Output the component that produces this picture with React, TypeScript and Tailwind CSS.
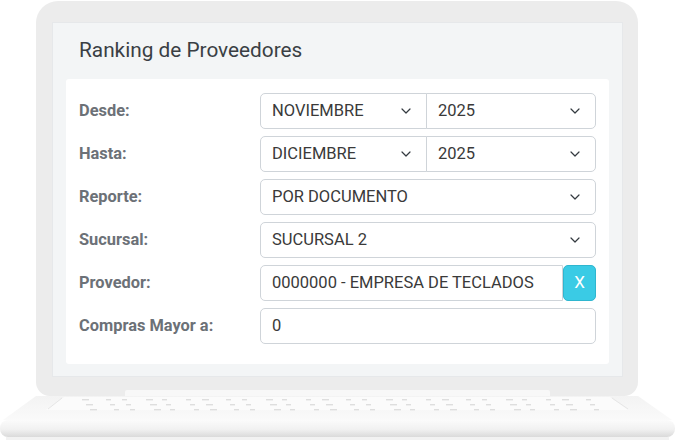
import { ChevronDown } from "lucide-react";

type Field = { label: string; kind: "split" | "select" | "provider" | "input"; values: string[] };

const FIELDS: Field[] = [
  { label: "Desde:", kind: "split", values: ["NOVIEMBRE", "2025"] },
  { label: "Hasta:", kind: "split", values: ["DICIEMBRE", "2025"] },
  { label: "Reporte:", kind: "select", values: ["POR DOCUMENTO"] },
  { label: "Sucursal:", kind: "select", values: ["SUCURSAL 2"] },
  { label: "Provedor:", kind: "provider", values: ["0000000 - EMPRESA DE TECLADOS"] },
  { label: "Compras Mayor a:", kind: "input", values: ["0"] },
];

function Chevron() {
  return <ChevronDown className="h-[16px] w-[16px] text-[#343a40]" strokeWidth={1.8} />;
}

function SelectBox({ value, className }: { value: string; className: string }) {
  return (
    <div
      className={`flex h-full items-center justify-between border border-[#cfd4d9] bg-white pl-[11px] pr-[12px] ${className}`}
    >
      <span>{value}</span>
      <Chevron />
    </div>
  );
}

function Control({ field }: { field: Field }) {
  if (field.kind === "split") {
    return (
      <div className="flex h-full">
        <SelectBox value={field.values[0]} className="w-[167px] rounded-l-[5px]" />
        <SelectBox value={field.values[1]} className="-ml-px flex-1 rounded-r-[5px]" />
      </div>
    );
  }
  if (field.kind === "select") {
    return <SelectBox value={field.values[0]} className="rounded-[5px]" />;
  }
  if (field.kind === "provider") {
    return (
      <div className="flex h-full">
        <div className="flex flex-1 items-center rounded-l-[5px] border border-[#cfd4d9] bg-white pl-[11px]">
          {field.values[0]}
        </div>
        <div className="flex w-[33px] items-center justify-center rounded-[5px] border border-[#2fb6cf] bg-[#3acbe5] text-[17px] text-white">
          X
        </div>
      </div>
    );
  }
  return (
    <div className="flex h-full items-center rounded-[5px] border border-[#cfd4d9] bg-white pl-[11px]">
      {field.values[0]}
    </div>
  );
}

function Base() {
  const rows = [3, 8, 13];
  return (
    <svg width="675" height="44" viewBox="0 0 675 44" className="block">
      <defs>
        <linearGradient id="lip" x1="0" y1="0" x2="0" y2="1">
          <stop offset="0" stopColor="#fbfbfb" />
          <stop offset="0.55" stopColor="#f1f1f1" />
          <stop offset="1" stopColor="#dadada" />
        </linearGradient>
        <linearGradient id="deck" x1="0" y1="0" x2="0" y2="1">
          <stop offset="0" stopColor="#f3f3f3" />
          <stop offset="1" stopColor="#fafafa" />
        </linearGradient>
      </defs>
      <polygon points="36,0 638,0 672,24 3,24" fill="url(#deck)" />
      <polygon points="64,1 610,1 628,14 46,14" fill="#fbfbfb" />
      <line x1="62" y1="2" x2="48" y2="13" stroke="#e6e6e6" />
      <line x1="612" y1="2" x2="628" y2="13" stroke="#e6e6e6" />
      {rows.map((y, r) =>
        Array.from({ length: 26 }).map((_, i) => (
          <rect
            key={`${r}-${i}`}
            x={82 + r * 4 + i * 20 + (i % 2) * 4}
            y={y}
            width={i % 3 === 0 ? 7 : 5}
            height={1.4}
            fill="#dedede"
          />
        ))
      )}
      <rect x="0" y="24" width="675" height="17" rx="8" fill="url(#lip)" />
      <rect x="6" y="41" width="663" height="3" fill="#f2f2f2" />
    </svg>
  );
}

export default function App() {
  return (
    <div
      className="h-[440px] w-[675px] overflow-hidden bg-white"
      style={{ fontFamily: "Roboto, 'Liberation Sans', sans-serif" }}
    >
      <div className="ml-[36px] mt-px flex h-[395px] w-[602px] flex-col rounded-t-[22px] rounded-b-[14px] bg-[#ececec] pl-[16px] pr-[15px] pt-[21px]">
        <div className="flex h-[355px] flex-col border border-[#e6e8ea] bg-[#f3f5f6]">
          <div className="flex h-[56px] items-center pl-[26px] text-[20.8px] text-[#3a3f44]">
            Ranking de Proveedores
          </div>
          <div className="mx-[13px] flex flex-col gap-[7px] rounded-[3px] bg-white pb-[20px] pl-[13px] pr-[13px] pt-[14px] text-[16.5px] text-[#3a3a3a]">
            {FIELDS.map((f) => (
              <div key={f.label} className="flex h-[36px] items-center">
                <div className="w-[181px] text-[16.4px] font-bold text-[#6c7177]">{f.label}</div>
                <div className="h-full flex-1">
                  <Control field={f} />
                </div>
              </div>
            ))}
          </div>
        </div>
        <div className="mx-[73px] mt-[13px] h-[6px] rounded-t-[2px] bg-[#f8f8f8]" />
      </div>
      <Base />
    </div>
  );
}
